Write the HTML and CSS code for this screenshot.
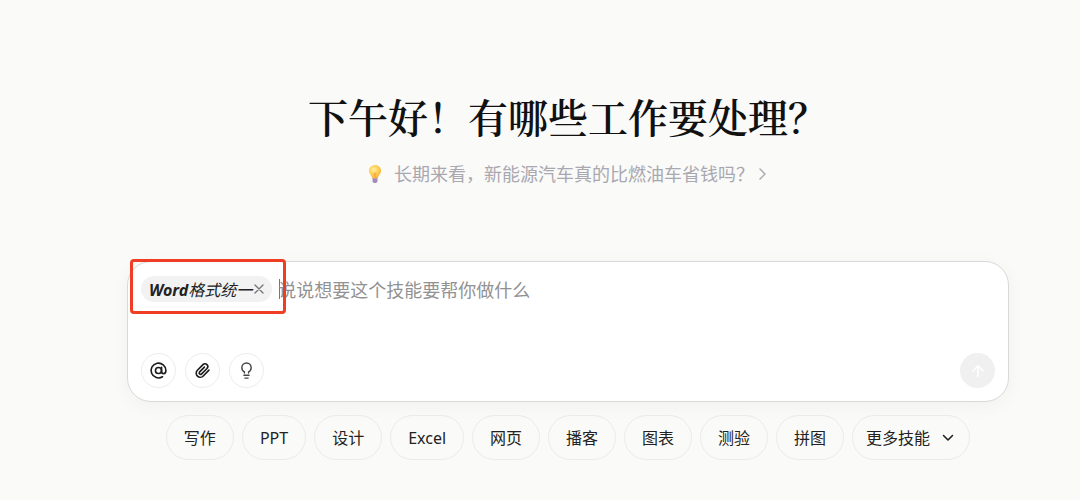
FILE: index.html
```html
<!DOCTYPE html>
<html lang="zh-CN">
<head>
<meta charset="utf-8">
<meta name="viewport" content="width=device-width, initial-scale=1">
<title>工作助手</title>
<link rel="stylesheet" href="styles.css">
</head>
<body>
<main class="home">
  <h1 class="greeting">下午好！有哪些工作要处理？</h1>
  <a class="topic" href="#">
    <svg class="topic-bulb" viewBox="0 0 14 20" aria-hidden="true">
      <defs>
        <radialGradient id="glow" cx="0.4" cy="0.35" r="0.65">
          <stop offset="0" stop-color="#fff0a0"/>
          <stop offset="0.5" stop-color="#ffd35c"/>
          <stop offset="1" stop-color="#f9b23c"/>
        </radialGradient>
      </defs>
      <path d="M7 1C3.500 1 1 3.500 1 6.800c0 2.600 1.500 3.900 2.500 5.400.5.800.7 1.500.9 2.300h5.200c.2-.8.4-1.500.9-2.300C11.500 10.700 13 9.400 13 6.800 13 3.500 10.500 1 7 1z" fill="url(#glow)"/>
      <path d="M5.300 8l1 1.200.7-1 .7 1 1-1.200L7.600 14H6.400z" fill="#f7ae42"/>
      <path d="M4.500 14.300h5v2.900c0 .8-.8 1.100-1.200 1.500-.6.500-2 .5-2.600 0-.4-.4-1.200-.7-1.200-1.500z" fill="#a38bb5"/>
    </svg>
    <span>长期来看，新能源汽车真的比燃油车省钱吗？</span>
    <svg class="topic-arrow" viewBox="0 0 10 14" aria-hidden="true"><path d="M2 2l5 5-5 5"/></svg>
  </a>

  <form class="composer">
    <div class="prompt">
      <span class="skill">
        <span class="skill-name"><b>Word</b>格式统一</span>
        <button class="skill-remove" type="button" aria-label="移除技能">
          <svg viewBox="0 0 10 10" aria-hidden="true"><path d="M1 1l8 8M9 1L1 9"/></svg>
        </button>
      </span>
      <span class="caret"></span>
      <input class="prompt-input" type="text" aria-label="任务描述" placeholder="说说想要这个技能要帮你做什么">
    </div>
    <div class="tools">
      <button class="tool" type="button" aria-label="提及">
        <svg viewBox="0 0 20 20" aria-hidden="true"><circle cx="10" cy="10" r="3.200"/><path d="M13.200 6.600v4.400c0 1.500.9 2.300 2.100 2.300 1.500 0 2.500-1.300 2.500-3.300A7.800 7.800 0 1 0 14.200 16.600"/></svg>
      </button>
      <button class="tool" type="button" aria-label="附件">
        <svg viewBox="0 0 20 20" aria-hidden="true"><path d="M16.800 9.600l-6 6.200a4.300 4.300 0 0 1-6.200-6l5.900-6a2.900 2.900 0 0 1 4.200 0c1.100 1.100 1.100 2.900 0 4.100l-5.800 5.900a1.500 1.500 0 0 1-2.100-2.100l5.200-5.300"/></svg>
      </button>
      <button class="tool tool-idea" type="button" aria-label="灵感">
        <svg viewBox="0 0 20 20" aria-hidden="true"><path d="M7.800 12.600v-1.200C6.200 10.600 5.100 9 5.100 7a4.900 4.900 0 0 1 9.800 0c0 2-1.100 3.600-2.700 4.400v1.200M7.300 15h5.400M8.300 18h3.400"/></svg>
      </button>
      <button class="send" type="submit" aria-label="发送" disabled>
        <svg viewBox="0 0 14 14" aria-hidden="true"><path d="M7 12.500V2M1.800 7L7 1.800 12.200 7"/></svg>
      </button>
    </div>
    <div class="highlight"></div>
  </form>

  <nav class="skills" aria-label="技能">
    <button class="chip" type="button">写作</button>
    <button class="chip" type="button">PPT</button>
    <button class="chip" type="button">设计</button>
    <button class="chip" type="button">Excel</button>
    <button class="chip" type="button">网页</button>
    <button class="chip" type="button">播客</button>
    <button class="chip" type="button">图表</button>
    <button class="chip" type="button">测验</button>
    <button class="chip" type="button">拼图</button>
    <button class="chip chip-more" type="button">更多技能
      <svg viewBox="0 0 12 8" aria-hidden="true"><path d="M1.500 1.500L6 6l4.500-4.500"/></svg>
    </button>
  </nav>
</main>
</body>
</html>
```
FILE: styles.css
```css
* {
  box-sizing: border-box;
}

body {
  margin: 0;
  background: #fafaf8;
  color: #222;
  font-family: "Noto Sans", "Noto Sans CJK SC", sans-serif;
}

button,
input {
  font: inherit;
  color: inherit;
}

svg {
  display: block;
  fill: none;
  stroke: currentColor;
  stroke-linecap: round;
  stroke-linejoin: round;
}

.home {
  display: flex;
  flex-direction: column;
  align-items: center;
  padding: 88px 71px 24px 127px;
}

.greeting {
  margin: 0;
  color: #111;
  font-family: "Noto Serif CJK SC", "Source Han Serif SC", "Noto Sans CJK SC", serif;
  font-size: 40px;
  font-weight: 600;
  line-height: 56px;
  white-space: nowrap;
}

.topic {
  display: flex;
  align-items: center;
  margin-top: 16px;
  color: #a9a8b1;
  font-size: 18px;
  line-height: 28px;
  text-decoration: none;
  white-space: nowrap;
}

.topic-bulb {
  width: 14px;
  height: 20px;
  margin-right: 12px;
  stroke: none;
}

.topic-arrow {
  width: 10px;
  height: 14px;
  margin-left: 4px;
  stroke-width: 1.4;
}

.composer {
  position: relative;
  width: 100%;
  max-width: 960px;
  margin-top: 73px;
  padding: 13px;
  border: 1px solid #d9d9d9;
  border-radius: 24px;
  background: #fff;
  box-shadow: 0 4px 20px rgba(0, 0, 0, 0.04);
}

.prompt {
  display: flex;
  align-items: center;
  height: 28px;
}

.skill {
  display: flex;
  align-items: center;
  gap: 2px;
  height: 26px;
  padding: 0 8px;
  border-radius: 13px;
  background: #f2f2f2;
  white-space: nowrap;
}

.skill-name {
  padding-top: 2px;
  font-size: 16px;
  font-style: italic;
  line-height: 24px;
}

.skill-remove {
  padding: 0;
  border: 0;
  background: none;
  color: #777;
}

.skill-remove svg {
  width: 10px;
  height: 10px;
  stroke-width: 1.4;
}

.caret {
  width: 1px;
  height: 20px;
  margin: 0 -2px 0 7px;
  background: #777;
}

.prompt-input {
  flex: 1;
  min-width: 0;
  padding: 2px 0 0;
  border: 0;
  outline: 0;
  background: none;
  font-size: 18px;
  line-height: 28px;
}

.prompt-input::placeholder {
  color: #929292;
  opacity: 1;
}

.tools {
  display: flex;
  gap: 9px;
  margin-top: 50px;
}

.tool,
.send {
  display: grid;
  place-items: center;
  width: 35px;
  height: 35px;
  padding: 0;
  border: 1px solid #ececec;
  border-radius: 50%;
  background: #fff;
  color: #1c1c1c;
}

.tool svg {
  width: 19px;
  height: 19px;
  stroke-width: 1.7;
}

.tool-idea {
  color: #444;
}

.tool-idea svg {
  stroke-width: 1.5;
}

.send {
  margin-left: auto;
  border: 0;
  background: #f0f0f0;
  color: #fff;
}

.send svg {
  width: 14px;
  height: 14px;
  stroke-width: 1.5;
}

.highlight {
  position: absolute;
  top: -3px;
  left: 2px;
  width: 156px;
  height: 55px;
  border: 3px solid #f03e25;
  border-radius: 4px;
  pointer-events: none;
}

.skills {
  display: flex;
  flex-wrap: wrap;
  justify-content: center;
  gap: 8px;
  margin-top: 13px;
}

.chip {
  height: 45px;
  padding: 0 17px;
  border: 1px solid #ebebe9;
  border-radius: 23px;
  background: #fafaf8;
  font-size: 16px;
  line-height: 24px;
  white-space: nowrap;
}

.chip-more {
  display: flex;
  align-items: center;
  gap: 12px;
  padding: 0 15px 0 13px;
}

.chip-more svg {
  width: 12px;
  height: 8px;
  stroke-width: 1.6;
}
```
